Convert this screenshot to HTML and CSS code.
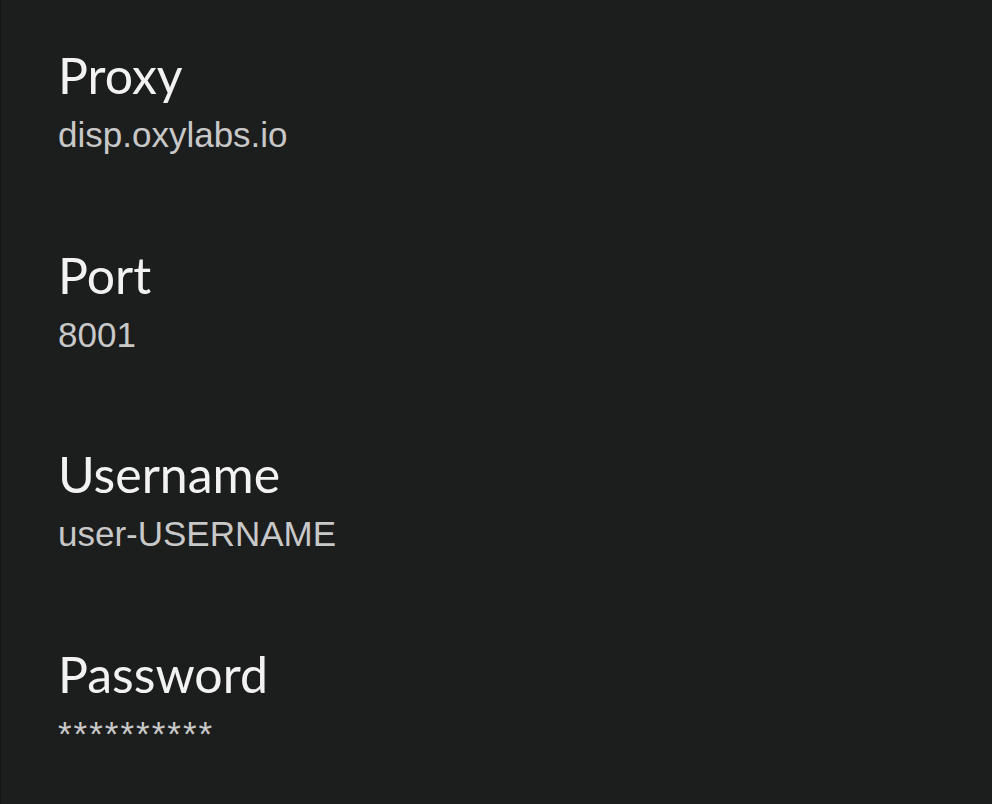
FILE: index.html
```html
<!DOCTYPE html>
<html lang="en">
<head>
  <meta charset="UTF-8" />
  <meta name="viewport" content="width=device-width, initial-scale=1.0"/>
  <title>Proxy settings</title>
  <link rel="stylesheet" href="styles.css">
</head>
<body>

<div class="settings">
  <div class="item">
    <div class="title">Proxy</div>
    <div class="summary">disp.oxylabs.io</div>
  </div>
  <div class="item">
    <div class="title">Port</div>
    <div class="summary">8001</div>
  </div>
  <div class="item">
    <div class="title">Username</div>
    <div class="summary">user-USERNAME</div>
  </div>
  <div class="item">
    <div class="title">Password</div>
    <div class="summary masked">**********</div>
  </div>
</div>

</body>
</html>
```

FILE: styles.css
```css
html, body {
  margin: 0;
  background-color: #1c1d1d;
}

body {
  min-height: 100vh;
  border-left: 1px solid #151616;
}

.settings {
  display: flex;
  flex-direction: column;
  padding: 43px 0 0 57px;
}

.item {
  height: 199.5px;
}

.title {
  font-family: Lato, "Noto Sans", sans-serif;
  font-size: 50px;
  line-height: 64px;
  color: #f2f2f2;
}

.summary {
  margin-top: 4px;
  font-family: "Liberation Sans", Arial, sans-serif;
  font-size: 35px;
  line-height: 48px;
  color: #c8c8c8;
}

.masked {
  letter-spacing: 2px;
}
```
